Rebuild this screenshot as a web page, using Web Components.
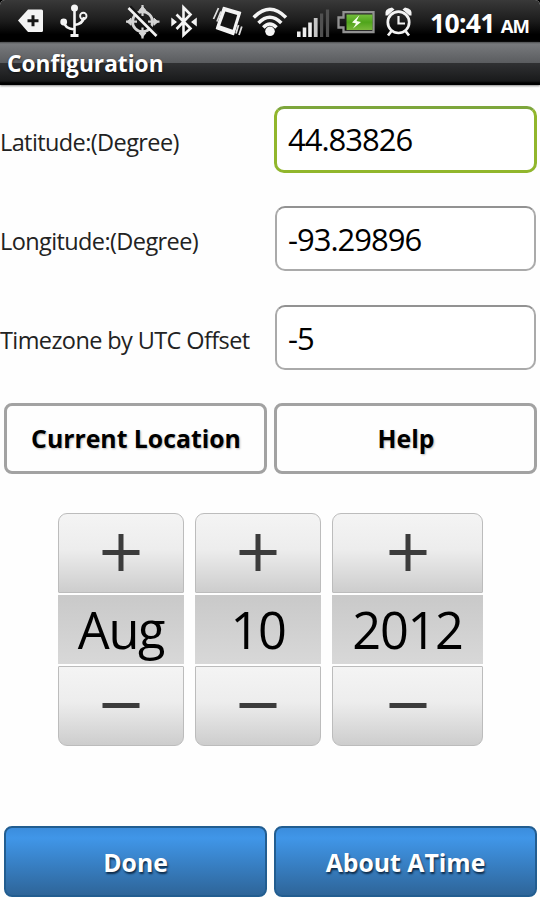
<!DOCTYPE html>
<html lang="en">
<head>
<meta charset="utf-8">
<title>Configuration</title>
<style>
    * {
        box-sizing: border-box;
    }
    body {
        margin: 0;
        width: 540px;
        height: 900px;
        overflow: hidden;
        background: #fefefe;
        color: #000;
        font-family: "Open Sans", "Noto Sans", sans-serif;
    }
</style>
</head>
<body>
<config-screen></config-screen>

<script>
class StatusBar extends HTMLElement {
    constructor() {
        super();
        this.shadowDOM = this.attachShadow({mode: "open"});
    }

    connectedCallback() {
        this.shadowDOM.innerHTML = `
            <style>
                :host {
                    display: grid;
                    grid-template-columns: 420px 1fr;
                    height: 42px;
                    background: linear-gradient(#393939, #1c1c1c 50%, #000 82%, #000);
                    color: #fff;
                    border-radius: 5px 5px 0 0;
                    box-shadow: 0 -6px 0 6px #000;
                    overflow: hidden;
                }
                svg {
                    display: block;
                }
                .clock {
                    display: flex;
                    align-items: baseline;
                    gap: 6px;
                    padding-left: 10px;
                    font-weight: 700;
                    white-space: nowrap;
                    line-height: 46px;
                }
                .time {
                    font-size: 26.5px;
                    letter-spacing: -0.7px;
                }
                .half {
                    font-size: 18.5px;
                    letter-spacing: -0.9px;
                }
            </style>
            <svg width="420" height="42" viewBox="0 0 420 42" fill="none" stroke="#f4f4f4" stroke-width="2">
                <defs>
                    <linearGradient id="charge" x1="0" y1="0" x2="0" y2="1">
                        <stop offset="0" stop-color="#74bd3c"/>
                        <stop offset=".5" stop-color="#4fa51b"/>
                        <stop offset="1" stop-color="#79b83b"/>
                    </linearGradient>
                </defs>
                <!-- input tag -->
                <path d="M18 20.500L28 9.500H41.500Q43 9.500 43 11V30.500Q43 32 41.500 32H28Z" fill="#f4f4f4" stroke="none"/>
                <path d="M27.500 20.800H38.500M33 15.300V26.300" stroke="#181818" stroke-width="3"/>
                <!-- usb -->
                <path d="M74.500 8V35M74.500 29.500Q64.500 28.500 64 22M74.500 25Q83 24 84 17" stroke-width="2.600"/>
                <circle cx="74.500" cy="8" r="3.500" fill="#f4f4f4" stroke="none"/>
                <circle cx="63.700" cy="22" r="3.400" fill="#f4f4f4" stroke="none"/>
                <circle cx="83.300" cy="16" r="3.200" stroke-width="1.900"/>
                <path d="M70.500 35.500H78.500" stroke-width="3.200"/>
                <!-- gps off -->
                <g stroke="#d4d4d4">
                    <circle cx="142.500" cy="21.700" r="10" stroke-width="2.800"/>
                    <path d="M142.500 5V16M142.500 27.500V38.500M126 21.700H137M148 21.700H159.500" stroke-width="2.200"/>
                    <path d="M139 10.500L142.500 6.500L146 10.500ZM139 33L142.500 37L146 33ZM131 18.200L127 21.700L131 25.200ZM154 18.200L158 21.700L154 25.200Z" fill="#d4d4d4" stroke-width="1"/>
                </g>
                <path d="M130 6.500L158 34.500" stroke="#131313" stroke-width="3"/>
                <path d="M128.500 8L156.500 36" stroke-width="2.600"/>
                <!-- bluetooth -->
                <path d="M176.500 14.500L190.500 28.500L183.500 35V7.500L190.500 14.500L176.500 29" stroke-width="2.600"/>
                <path d="M171.300 17.500L177 22L171.300 26.500ZM196.800 17.500L191 22L196.800 26.500Z" fill="#f4f4f4" stroke="none"/>
                <!-- vibrate -->
                <path d="M223.500 7.500L240.500 12.500L233.500 34.500L216.500 28.500Z" fill="#f4f4f4" stroke="#f4f4f4" stroke-width="1.500" stroke-linejoin="round"/>
                <path d="M225.300 11.500L237.200 15L232.700 29.700L220.200 25.500Z" fill="#161616" stroke="none"/>
                <path d="M218.500 8L213.500 19M221 11.500L217 21.500M238.500 25L236 33.500M241.800 26.500L239 35" stroke-width="1.800" stroke="#ddd"/>
                <!-- wifi -->
                <path d="M253.700 17.500Q269.800 1 286 17.500M258.500 23Q269.800 11.500 281.300 23M263.300 27.500Q269.800 20.500 276.500 27.500" stroke-width="3.500"/>
                <circle cx="270" cy="31.300" r="4.800" fill="#f4f4f4" stroke="none"/>
                <!-- signal -->
                <path d="M298.800 37V31.500M304.500 37V27.500M310 37V22.500" stroke="#ececec" stroke-width="3.600"/>
                <path d="M315.700 37V18" stroke="#c4c4c4" stroke-width="3.800"/>
                <path d="M321.600 37V13.500M327.500 37V9.500" stroke="#505050" stroke-width="3.200"/>
                <!-- battery -->
                <path d="M343.500 12.200H373.500V32H343.500V27.500H338.500V17.500H343.500Z" stroke="#929292" stroke-width="2.300"/>
                <rect x="346.500" y="14.500" width="26" height="15.500" fill="url(#charge)" stroke="none"/>
                <path d="M359.500 15L352 22.500L356 23.500L353 28.500L361 22L356.500 21Z" fill="#f7ffef" stroke="none"/>
                <!-- alarm -->
                <circle cx="398.500" cy="22.300" r="10.700" stroke-width="2.700"/>
                <path d="M398.500 16V23.500H405" stroke-width="2.200"/>
                <path d="M391.500 31L388 35.500M405.500 31L409 35.500" stroke-width="2.700"/>
                <path d="M385.500 15.500Q384 8.500 392 7.500L394.500 9.500L387.500 15.500ZM411.500 15.500Q413 8.500 405 7.500L402.500 9.500L409.500 15.500Z" fill="#f4f4f4" stroke="none"/>
            </svg>
            <div class="clock"><span class="time">10:41</span><span class="half">AM</span></div>`;
    }
}
customElements.define("status-bar", StatusBar);

class TitleBar extends HTMLElement {
    constructor() {
        super();
        this.shadowDOM = this.attachShadow({mode: "open"});
    }

    connectedCallback() {
        this.shadowDOM.innerHTML = `
            <style>
                :host {
                    display: block;
                    position: relative;
                    height: 43px;
                    padding-left: 7px;
                    background: linear-gradient(#4d4f51, #77797c 2px, #5b5d60 20.500px, #303133 21px, #191a1b 39px, #000 41px, #000);
                    box-shadow: 0 1px 2px #888;
                    color: #fff;
                    font-size: 22.700px;
                    font-weight: 700;
                    line-height: 43px;
                    text-shadow: 0 1px 2px #111;
                }
            </style>
            <slot></slot>`;
    }
}
customElements.define("title-bar", TitleBar);

class FormField extends HTMLElement {
    constructor() {
        super();
        this.shadowDOM = this.attachShadow({mode: "open"});
    }

    connectedCallback() {
        this.shadowDOM.innerHTML = `
            <style>
                :host {
                    display: grid;
                    grid-template-columns: 274px 263px;
                    align-items: center;
                    height: 99px;
                }
                label {
                    padding: 5px 0 0 0;
                    color: #222;
                    font-size: 23.500px;
                    letter-spacing: -0.6px;
                    white-space: nowrap;
                }
                .box {
                    box-sizing: border-box;
                    height: 65px;
                    margin: 0 1px;
                    padding-left: 11px;
                    border: 2px solid #aaa;
                    border-top-color: #929292;
                    border-radius: 10px;
                    background: #fff;
                    font-size: 31px;
                    line-height: 62px;
                    letter-spacing: -1px;
                }
                :host([focused]) .box {
                    height: 67px;
                    margin: 0;
                    padding-left: 11px;
                    border: 3px solid #91b62c;
                    border-top-color: #7da63c;
                    line-height: 61px;
                }
            </style>
            <label>${this.getAttribute("label")}</label>
            <div class="box"><slot></slot></div>`;
    }
}
customElements.define("form-field", FormField);

class PushButton extends HTMLElement {
    constructor() {
        super();
        this.shadowDOM = this.attachShadow({mode: "open"});
    }

    connectedCallback() {
        this.shadowDOM.innerHTML = `
            <style>
                :host {
                    display: flex;
                    box-sizing: border-box;
                    align-items: center;
                    justify-content: center;
                    height: 71px;
                    padding: 0 0 2px 1px;
                    border: 3px solid #a2a2a2;
                    border-radius: 8px;
                    background: #fefefe;
                    font-size: 24.800px;
                    font-weight: 700;
                    text-shadow: 1px 1px 2px #bbb;
                    white-space: nowrap;
                }
                :host([primary]) {
                    padding: 0;
                    border: 2px solid #225d90;
                    background: linear-gradient(#3b8ddd, #4096e8 15%, #2e6599);
                    color: #fff;
                    text-shadow: 1px 2px 2px #0d2a47;
                }
            </style>
            <slot></slot>`;
    }
}
customElements.define("push-button", PushButton);

class DateWheel extends HTMLElement {
    constructor() {
        super();
        this.shadowDOM = this.attachShadow({mode: "open"});
    }

    connectedCallback() {
        this.shadowDOM.innerHTML = `
            <style>
                :host {
                    display: grid;
                    grid-template-rows: 80px 69px 80px;
                    gap: 2px;
                }
                .step {
                    display: grid;
                    place-items: center;
                    border: 1px solid #bcbcbc;
                    background: linear-gradient(#f4f4f4, #ededed 45%, #cdcdcd);
                }
                .up {
                    border-radius: 9px 9px 1px 1px;
                }
                .down {
                    border-radius: 1px 1px 9px 9px;
                }
                .value {
                    background: linear-gradient(#c9c9c9, #d8d8d8);
                    font-size: 50.500px;
                    line-height: 70px;
                    letter-spacing: -1.3px;
                    text-align: center;
                    white-space: nowrap;
                }
                svg {
                    stroke: #3c3c3c;
                    stroke-width: 5;
                }
            </style>
            <div class="step up"><svg width="38" height="38"><path d="M0.500 18.500H37.500M19 0V37"/></svg></div>
            <div class="value"><slot></slot></div>
            <div class="step down"><svg width="38" height="38"><path d="M0.500 18.500H37.500"/></svg></div>`;
    }
}
customElements.define("date-wheel", DateWheel);

class ConfigScreen extends HTMLElement {
    constructor() {
        super();
        this.shadowDOM = this.attachShadow({mode: "open"});
    }

    connectedCallback() {
        this.shadowDOM.innerHTML = `
            <style>
                :host {
                    display: flex;
                    flex-direction: column;
                    height: 900px;
                }
                .fields {
                    padding-top: 5px;
                }
                .buttons {
                    display: grid;
                    grid-template-columns: 263px 263px;
                    gap: 7px;
                    padding: 16px 0 0 4px;
                }
                .date {
                    display: grid;
                    grid-template-columns: 126px 126px 151px;
                    gap: 11px;
                    padding: 39px 0 0 58px;
                }
                .footer {
                    margin-top: auto;
                    padding: 0 0 3px 4px;
                }
            </style>
            <status-bar></status-bar>
            <title-bar>Configuration</title-bar>
            <div class="fields">
                <form-field label="Latitude:(Degree)" focused>44.83826</form-field>
                <form-field label="Longitude:(Degree)">-93.29896</form-field>
                <form-field label="Timezone by UTC Offset">-5</form-field>
            </div>
            <div class="buttons">
                <push-button>Current Location</push-button>
                <push-button>Help</push-button>
            </div>
            <div class="date">
                <date-wheel>Aug</date-wheel>
                <date-wheel>10</date-wheel>
                <date-wheel>2012</date-wheel>
            </div>
            <div class="buttons footer">
                <push-button primary>Done</push-button>
                <push-button primary>About ATime</push-button>
            </div>`;
    }
}
customElements.define("config-screen", ConfigScreen);
</script>
</body>
</html>
